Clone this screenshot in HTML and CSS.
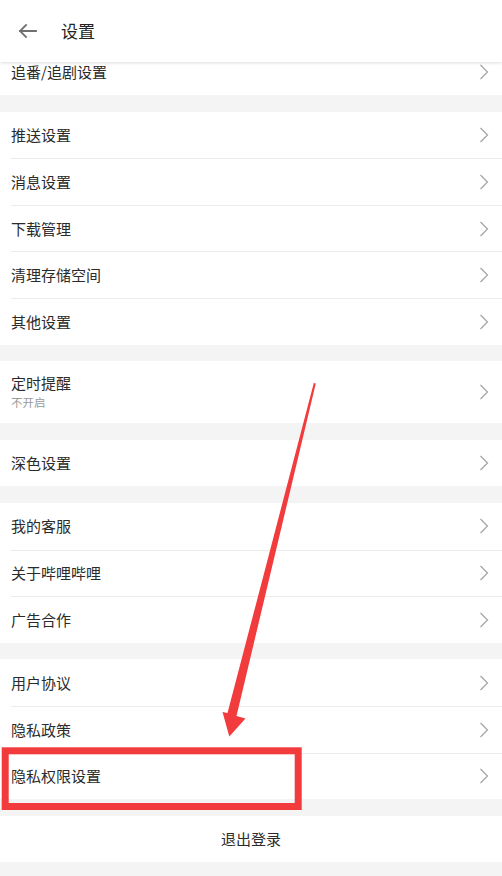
FILE: index.html
```html
<!DOCTYPE html>
<html lang="zh-CN">
<head>
<meta charset="utf-8">
<title>设置</title>
<link rel="stylesheet" href="styles.css">
</head>
<body>
<div class="page">
  <header class="topbar">
    <svg class="back" width="20" height="16" viewBox="0 0 20 16"><path d="M18 8H2M8 2L2 8l6 6" fill="none" stroke="#707070" stroke-width="1.8" stroke-linecap="square"/></svg>
    <span class="title">设置</span>
  </header>

  <main class="list">
    <section class="group first">
      <div class="row"><span class="label">追番/追剧设置</span><svg class="chev" width="10" height="16" viewBox="0 0 10 16"><path d="M1.5 1l7 7-7 7" fill="none" stroke="#a6a6a6" stroke-width="1.3"/></svg></div>
    </section>

    <section class="group">
      <div class="row"><span class="label">推送设置</span><svg class="chev" width="10" height="16" viewBox="0 0 10 16"><path d="M1.5 1l7 7-7 7" fill="none" stroke="#a6a6a6" stroke-width="1.3"/></svg></div>
      <div class="row"><span class="label">消息设置</span><svg class="chev" width="10" height="16" viewBox="0 0 10 16"><path d="M1.5 1l7 7-7 7" fill="none" stroke="#a6a6a6" stroke-width="1.3"/></svg></div>
      <div class="row"><span class="label">下载管理</span><svg class="chev" width="10" height="16" viewBox="0 0 10 16"><path d="M1.5 1l7 7-7 7" fill="none" stroke="#a6a6a6" stroke-width="1.3"/></svg></div>
      <div class="row"><span class="label">清理存储空间</span><svg class="chev" width="10" height="16" viewBox="0 0 10 16"><path d="M1.5 1l7 7-7 7" fill="none" stroke="#a6a6a6" stroke-width="1.3"/></svg></div>
      <div class="row"><span class="label">其他设置</span><svg class="chev" width="10" height="16" viewBox="0 0 10 16"><path d="M1.5 1l7 7-7 7" fill="none" stroke="#a6a6a6" stroke-width="1.3"/></svg></div>
    </section>

    <section class="group">
      <div class="row tall">
        <div class="stack"><span class="label">定时提醒</span><span class="sub">不开启</span></div>
        <svg class="chev" width="10" height="16" viewBox="0 0 10 16"><path d="M1.5 1l7 7-7 7" fill="none" stroke="#a6a6a6" stroke-width="1.3"/></svg>
      </div>
    </section>

    <section class="group">
      <div class="row"><span class="label">深色设置</span><svg class="chev" width="10" height="16" viewBox="0 0 10 16"><path d="M1.5 1l7 7-7 7" fill="none" stroke="#a6a6a6" stroke-width="1.3"/></svg></div>
    </section>

    <section class="group">
      <div class="row"><span class="label">我的客服</span><svg class="chev" width="10" height="16" viewBox="0 0 10 16"><path d="M1.5 1l7 7-7 7" fill="none" stroke="#a6a6a6" stroke-width="1.3"/></svg></div>
      <div class="row"><span class="label">关于哔哩哔哩</span><svg class="chev" width="10" height="16" viewBox="0 0 10 16"><path d="M1.5 1l7 7-7 7" fill="none" stroke="#a6a6a6" stroke-width="1.3"/></svg></div>
      <div class="row"><span class="label">广告合作</span><svg class="chev" width="10" height="16" viewBox="0 0 10 16"><path d="M1.5 1l7 7-7 7" fill="none" stroke="#a6a6a6" stroke-width="1.3"/></svg></div>
    </section>

    <section class="group">
      <div class="row"><span class="label">用户协议</span><svg class="chev" width="10" height="16" viewBox="0 0 10 16"><path d="M1.5 1l7 7-7 7" fill="none" stroke="#a6a6a6" stroke-width="1.3"/></svg></div>
      <div class="row"><span class="label">隐私政策</span><svg class="chev" width="10" height="16" viewBox="0 0 10 16"><path d="M1.5 1l7 7-7 7" fill="none" stroke="#a6a6a6" stroke-width="1.3"/></svg></div>
      <div class="row"><span class="label">隐私权限设置</span><svg class="chev" width="10" height="16" viewBox="0 0 10 16"><path d="M1.5 1l7 7-7 7" fill="none" stroke="#a6a6a6" stroke-width="1.3"/></svg></div>
    </section>

    <section class="group">
      <div class="row logout"><span class="label">退出登录</span></div>
    </section>
  </main>

  <svg class="annot" width="502" height="876" viewBox="0 0 502 876">
    <rect x="5.2" y="750.8" width="293" height="55.7" fill="none" stroke="#f13b3c" stroke-width="7"/>
    <polygon points="313.8,383 315.8,383.5 236.5,716 245.5,718.5 229.3,736.5 222.5,712 227.5,713" fill="#f13b3c"/>
  </svg>
</div>
</body>
</html>
```

FILE: styles.css
```css
* { box-sizing: border-box; }

html, body {
  margin: 0;
  padding: 0;
  background: #f4f4f4;
}

body {
  font-family: "Noto Sans CJK SC", "Noto Sans", "Liberation Sans", sans-serif;
  color: #2b2b2b;
}

.page {
  position: relative;
  width: 502px;
  min-height: 876px;
  overflow: hidden;
}

.topbar {
  position: relative;
  z-index: 2;
  height: 62px;
  background: #fff;
  display: flex;
  align-items: center;
  padding-left: 18px;
  box-shadow: 0 1px 3px rgba(0, 0, 0, 0.14);
}

.back {
  display: block;
  margin-right: 23px;
}

.title {
  font-size: 17px;
  color: #222;
  line-height: 20px;
  margin-top: -1px;
}

.list {
  position: relative;
  z-index: 1;
  margin-top: -13.5px;
  display: flex;
  flex-direction: column;
  gap: 16.6px;
}

.group {
  background: #fff;
}

.row {
  height: 46.6px;
  margin-left: 11px;
  padding-right: 13px;
  display: flex;
  align-items: center;
  justify-content: space-between;
}

.row + .row {
  border-top: 1px solid #ececec;
}

.row.tall {
  height: 62px;
}

.label {
  font-size: 15px;
  line-height: 20px;
  color: #2b2b2b;
}

.stack {
  display: flex;
  flex-direction: column;
  margin-top: -2px;
}

.sub {
  font-size: 11.5px;
  line-height: 14px;
  color: #9a9a9a;
  margin-top: 2px;
}

.chev {
  display: block;
  flex: none;
}

.row.logout {
  margin-left: 0;
  padding-right: 0;
  justify-content: center;
}

.annot {
  position: absolute;
  top: 0;
  left: 0;
  z-index: 3;
  pointer-events: none;
}
```
